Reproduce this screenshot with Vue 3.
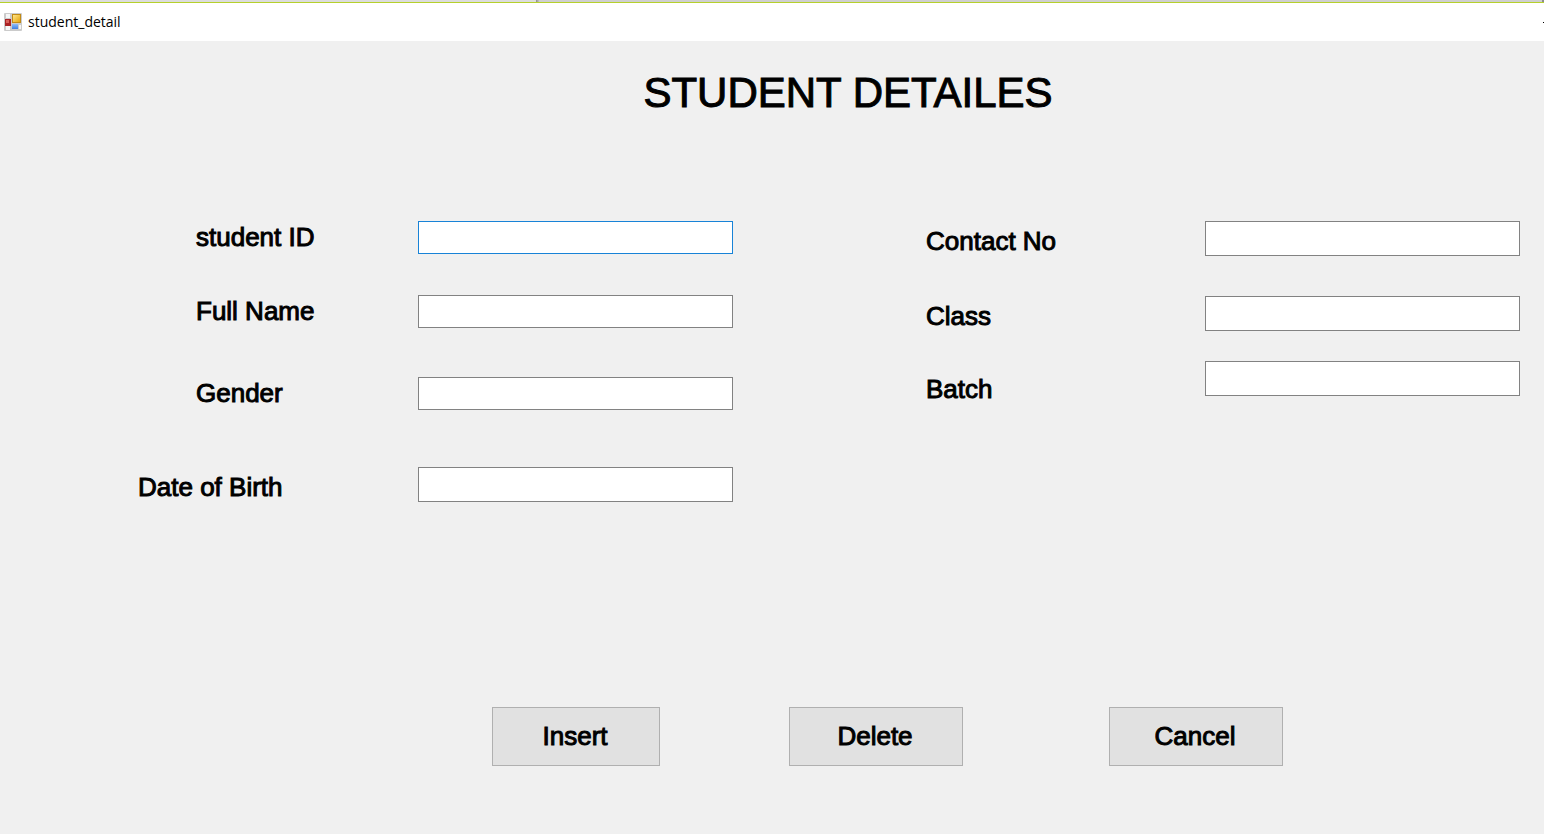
<script setup>
import { reactive } from 'vue'

const form = reactive({
  studentId: '',
  fullName: '',
  gender: '',
  birth: '',
  contact: '',
  className: '',
  batch: ''
})

const personal = [
  { key: 'studentId', label: 'student ID', active: true },
  { key: 'fullName', label: 'Full Name' },
  { key: 'gender', label: 'Gender' },
  { key: 'birth', label: 'Date of Birth', tall: true, wide: true }
]

const course = [
  { key: 'contact', label: 'Contact No' },
  { key: 'className', label: 'Class' },
  { key: 'batch', label: 'Batch', low: true }
]

function clear() {
  Object.keys(form).forEach((key) => (form[key] = ''))
}
</script>

<template>
  <div class="window">
    <div class="backdrop"><span class="tab"></span><span class="mark"></span><span class="rest"></span><span class="end"></span></div>
    <header class="titlebar">
      <svg class="app-icon" width="18" height="18" viewBox="0 0 18 18" aria-hidden="true">
        <defs>
          <linearGradient id="gold" x1="0" y1="0" x2="1" y2="1">
            <stop offset="0" stop-color="#ffe58a" />
            <stop offset="1" stop-color="#e5a50c" />
          </linearGradient>
          <linearGradient id="sky" x1="0" y1="0" x2="0" y2="1">
            <stop offset="0" stop-color="#8dbcf8" />
            <stop offset="1" stop-color="#3f7fe0" />
          </linearGradient>
        </defs>
        <rect width="18" height="18" rx="1" fill="#cbcbcb" />
        <path d="M2 1h4v4H2zM2 13h4v4H2zM15 12h2v4h-2z" fill="#f6f6f6" />
        <rect x="1" y="6" width="6" height="7" fill="#a92224" />
        <rect x="2" y="7" width="3" height="3" fill="#d8605a" />
        <rect x="8" y="1" width="9" height="9" fill="#c18a16" />
        <rect x="9" y="2" width="7" height="7" fill="url(#gold)" />
        <rect x="8" y="11" width="6" height="5" fill="url(#sky)" />
      </svg>
      <span class="caption">student_detail</span>
      <button class="minimize" type="button" aria-label="Minimize"></button>
    </header>

    <main class="body">
      <h1>STUDENT DETAILES</h1>

      <form class="fields" @submit.prevent>
        <div class="column personal">
          <div v-for="f in personal" :key="f.key" class="field">
            <label :for="f.key" :class="{ wide: f.wide }">{{ f.label }}</label>
            <input :id="f.key" v-model="form[f.key]" type="text" :class="{ active: f.active, tall: f.tall }" />
          </div>
        </div>
        <div class="column course">
          <div v-for="f in course" :key="f.key" class="field">
            <label :for="f.key" :class="{ low: f.low }">{{ f.label }}</label>
            <input :id="f.key" v-model="form[f.key]" type="text" class="tall" />
          </div>
        </div>
      </form>

      <div class="actions">
        <button class="insert" type="button">Insert</button>
        <button class="delete" type="button">Delete</button>
        <button class="cancel" type="button" @click="clear">Cancel</button>
      </div>
    </main>
  </div>
</template>

<style>
body {
  margin: 0;
  background: #f0f0f0;
}
</style>

<style scoped>
.window {
  min-height: 100vh;
  display: flex;
  flex-direction: column;
  overflow: hidden;
  color: #000;
  background: #f0f0f0;
  font-family: "Liberation Sans", Arial, sans-serif;
}

.backdrop {
  display: flex;
  height: 2px;
  border-bottom: 1px solid #b5d02b;
}

.tab {
  flex: 536;
  background: #dcdcdc;
}

.mark {
  width: 3px;
  background: linear-gradient(90deg, #8c8c8c, #c4c4c4);
}

.rest {
  flex: 1003;
  background: #cfcfcf;
}

.end {
  width: 2px;
  background: #8c8c8c;
}

.titlebar {
  display: flex;
  align-items: center;
  height: 38px;
  padding-left: 4px;
  gap: 6px;
  background: #fff;
}

.app-icon {
  flex: none;
}

.caption {
  flex: 1;
  font: 14px/20px "Open Sans", "Noto Sans", sans-serif;
}

.minimize {
  width: 1px;
  height: 1px;
  padding: 0;
  border: 0;
  background: #000;
}

.body {
  flex: 1;
}

h1 {
  margin: 0;
  padding: 28px 0 0 152px;
  font-size: 42px;
  line-height: 48px;
  font-weight: 400;
  text-align: center;
  -webkit-text-stroke: 1px #000;
}

.fields {
  display: grid;
  grid-template-columns: 733fr 193fr 594fr;
  padding: 104px 24px 0 0;
}

.column {
  display: grid;
  align-content: start;
}

.personal {
  grid-template-rows: 74px 82px 90px 240px;
}

.course {
  grid-column: 3;
  grid-template-rows: 75px 65px 90px;
}

.field {
  display: grid;
  align-items: start;
}

.personal .field {
  grid-template-columns: 418fr 315fr;
}

.course .field {
  grid-template-columns: 279fr 315fr;
}

label {
  font-size: 26px;
  line-height: 32px;
  -webkit-text-stroke: 1px #000;
}

.personal label {
  padding-left: 196px;
}

.personal label.wide {
  padding: 4px 0 0 138px;
}

.course label {
  padding-top: 4px;
}

.course label.low {
  padding-top: 12px;
}

input {
  box-sizing: border-box;
  width: 100%;
  height: 33px;
  margin: 0;
  padding: 0 6px;
  border: 1px solid #828282;
  border-radius: 0;
  background: #fff;
  font: 24px/28px "Liberation Sans", Arial, sans-serif;
  outline: none;
}

input.tall {
  height: 35px;
}

input.active,
input:focus {
  border: 1px solid #1883d7;
}

.actions {
  display: grid;
  grid-template-columns: 492fr 168fr 129fr 174fr 146fr 174fr 261fr;
}

.actions button {
  height: 59px;
  padding: 0 2px 2px 0;
  border: 1px solid #b0b0b0;
  border-radius: 0;
  color: #000;
  background: #e1e1e1;
  font: 26px/32px "Liberation Sans", Arial, sans-serif;
  -webkit-text-stroke: 1px #000;
}

.insert {
  grid-column: 2;
}

.delete {
  grid-column: 4;
}

.cancel {
  grid-column: 6;
}
</style>
